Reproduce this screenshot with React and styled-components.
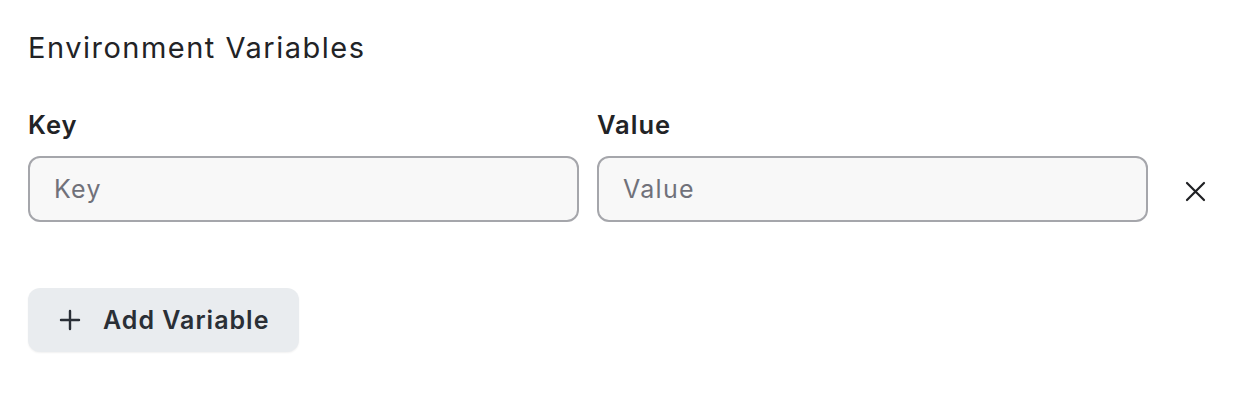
import React, { useState } from "react";
import styled, { createGlobalStyle } from "styled-components";

const GlobalStyle = createGlobalStyle`
  body {
    margin: 0;
    background: #ffffff;
    font-family: Inter, "Noto Sans", sans-serif;
    color: #1f2023;
  }
`;

const Section = styled.section`
  padding: 28px 28px;
  display: flex;
  flex-direction: column;
`;

const Title = styled.h2`
  margin: 0 0 42px;
  font-size: 29px;
  font-weight: 400;
  line-height: 40px;
  letter-spacing: 1.5px;
  color: #222326;
`;

const Row = styled.div`
  display: grid;
  grid-template-columns: 1fr 1fr 62px;
  column-gap: 18px;
  align-items: end;
`;

const Field = styled.div`
  display: flex;
  flex-direction: column;
  gap: 16px;
`;

const Label = styled.label`
  font-size: 25.5px;
  font-weight: 600;
  line-height: 30px;
  letter-spacing: 1px;
  color: #222326;
`;

const Input = styled.input`
  box-sizing: border-box;
  height: 66px;
  width: 100%;
  padding: 0 24px;
  border: 2px solid #a5a6ab;
  border-radius: 12px;
  background: #f8f8f8;
  font-family: inherit;
  font-size: 25px;
  letter-spacing: 1.3px;
  color: #222326;
  outline: none;
  &::placeholder {
    color: #70717a;
  }
`;

const RemoveButton = styled.button`
  height: 66px;
  display: flex;
  align-items: center;
  justify-content: center;
  background: none;
  border: none;
  padding: 4px 3px 0 0;
  color: #1f2023;
  cursor: pointer;
`;

const AddButton = styled.button`
  align-self: flex-start;
  margin-top: 66px;
  height: 64px;
  padding: 0 30px 0 31px;
  display: flex;
  align-items: center;
  gap: 22px;
  border: none;
  border-radius: 12px;
  background: #e9ecef;
  box-shadow: 0 1px 2px rgba(0, 0, 0, 0.06);
  font-family: inherit;
  font-size: 25px;
  font-weight: 600;
  letter-spacing: 1px;
  color: #2a2f36;
  cursor: pointer;
`;

function CloseIcon() {
  return (
    <svg width="21" height="21" viewBox="0 0 21 21" fill="none">
      <path d="M2 2L19 19M19 2L2 19" stroke="currentColor" strokeWidth="2.2" strokeLinecap="round" />
    </svg>
  );
}

function PlusIcon() {
  return (
    <svg width="22" height="22" viewBox="0 0 22 22" fill="none">
      <path d="M11 2V20M2 11H20" stroke="currentColor" strokeWidth="2.4" strokeLinecap="round" />
    </svg>
  );
}

export default function App() {
  const [vars, setVars] = useState([{ key: "", value: "" }]);

  const update = (i, name) => e => {
    const next = vars.slice();
    next[i] = { ...next[i], [name]: e.target.value };
    setVars(next);
  };

  return (
    <>
      <GlobalStyle />
      <Section>
        <Title>Environment Variables</Title>
        {vars.map((v, i) => (
          <Row key={i}>
            <Field>
              {i === 0 && <Label>Key</Label>}
              <Input placeholder="Key" value={v.key} onChange={update(i, "key")} />
            </Field>
            <Field>
              {i === 0 && <Label>Value</Label>}
              <Input placeholder="Value" value={v.value} onChange={update(i, "value")} />
            </Field>
            <RemoveButton onClick={() => setVars(vars.filter((_, j) => j !== i))}>
              <CloseIcon />
            </RemoveButton>
          </Row>
        ))}
        <AddButton onClick={() => setVars([...vars, { key: "", value: "" }])}>
          <PlusIcon />
          Add Variable
        </AddButton>
      </Section>
    </>
  );
}
